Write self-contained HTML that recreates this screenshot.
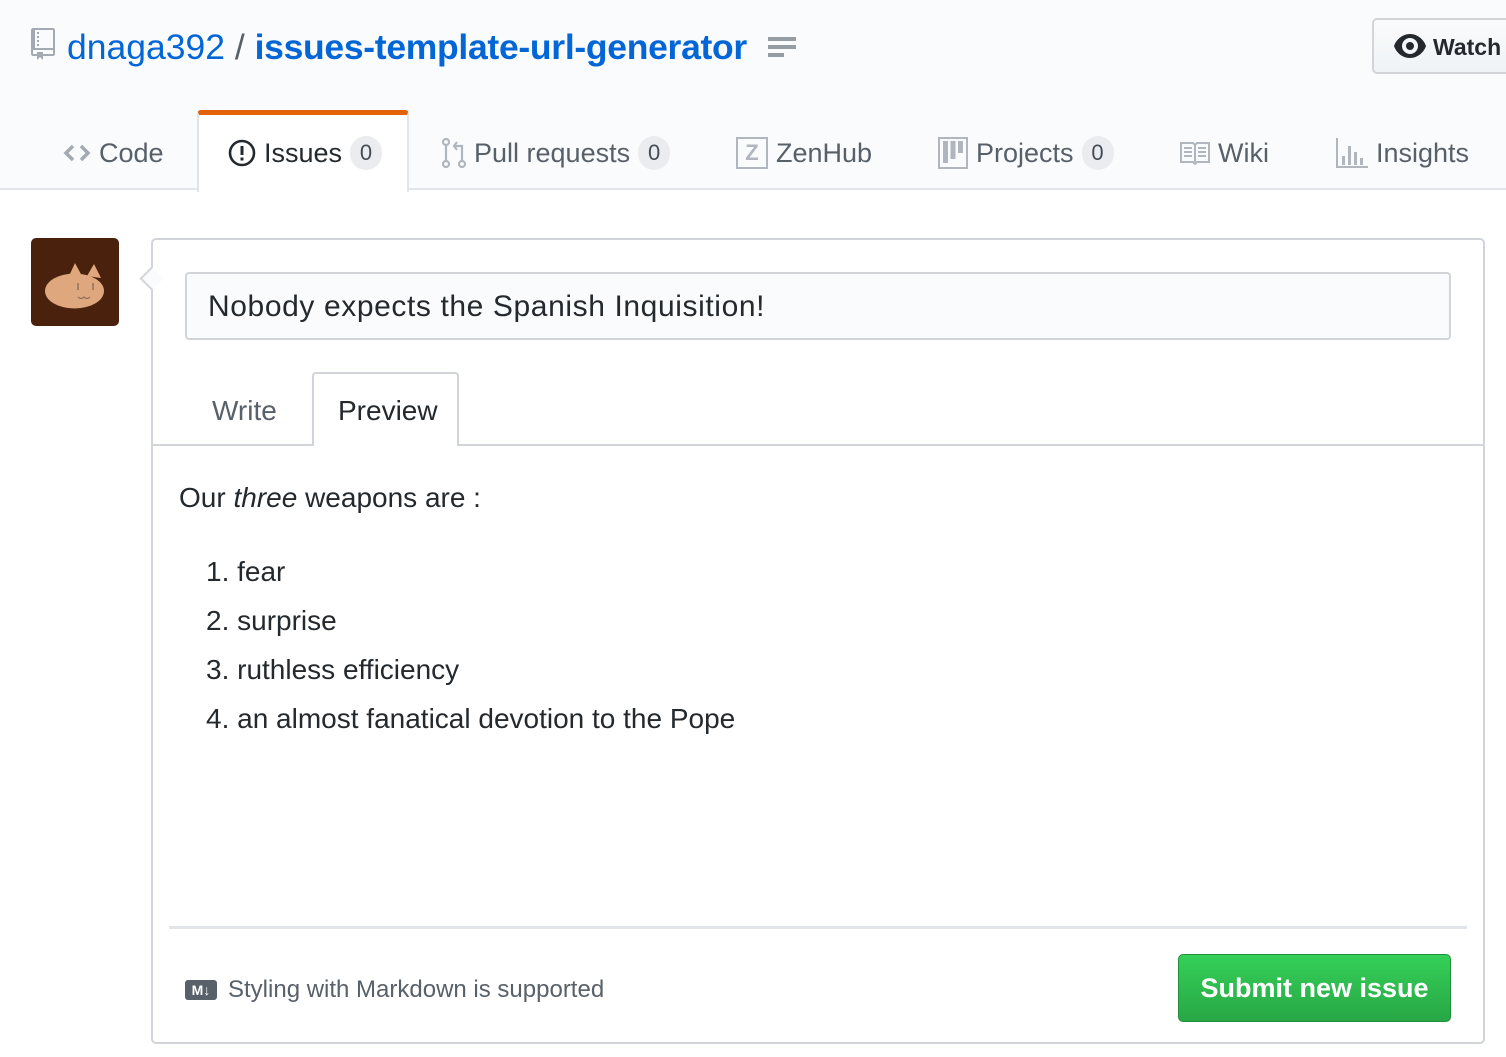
<!DOCTYPE html>
<html><head><meta charset="utf-8"><style>
*{margin:0;padding:0;box-sizing:border-box}
body{width:1506px;height:1057px;background:#fff;font-family:"Liberation Sans",sans-serif;color:#24292e;position:relative;overflow:hidden}
.a{position:absolute;white-space:nowrap}
.hdr{position:absolute;left:0;top:0;width:1506px;height:190px;background:#fafbfc;border-bottom:2px solid #e1e4e8}
.tab{position:absolute;top:136px;height:34px;line-height:34px;font-size:27px;color:#586069;white-space:nowrap;display:flex;align-items:center}
.cnt{display:inline-block;background:#eaecef;color:#444d56;border-radius:17px;height:34px;min-width:32px;text-align:center;font-size:22px;line-height:34px;margin-left:8px;padding:0 8px}
.li{position:absolute;left:206px;font-size:28px;line-height:32px;color:#24292e}
</style></head><body>
<div class="hdr"></div>
<svg class="a" style="left:30px;top:28px" width="26" height="32" viewBox="0 0 12 16"><path fill="#a3aab1" d="M4 9H3V8h1v1zm0-3H3v1h1V6zm0-2H3v1h1V4zm0-2H3v1h1V2zm8-1v12c0 .55-.45 1-1 1H6v2l-1.5-1.5L3 16v-2H1c-.55 0-1-.45-1-1V1c0-.55.45-1 1-1h10c.55 0 1 .45 1 1zm-1 10H1v2h2v-1h3v1h5v-2zm0-10H2v9h9V1z"/></svg>
<div class="a" style="left:67px;top:25px;font-size:35.5px;line-height:44px;color:#0366d6">dnaga392 <span style="color:#586069">/</span> <b style="font-weight:bold;letter-spacing:-0.3px">issues-template-url-generator</b></div>
<svg class="a" style="left:768px;top:37px" width="28" height="22" viewBox="0 0 28 22"><rect x="0" y="0" width="28" height="4" fill="#959da5"/><rect x="0" y="8" width="28" height="4" fill="#959da5"/><rect x="0" y="16" width="16" height="4" fill="#959da5"/></svg>
<div class="a" style="left:1372px;top:18px;width:150px;height:56px;border:2px solid #d1d5da;border-radius:5px;background:linear-gradient(#fafbfc,#eff3f6)"></div>
<svg class="a" style="left:1394px;top:34px" width="32" height="24" viewBox="0 0 16 12"><path fill="#24292e" d="M8 0C4 0 1 3 0 6c1 3 4 6 8 6s7-3 8-6c-1-3-4-6-8-6zm0 10a4 4 0 110-8 4 4 0 010 8zm0-6a2 2 0 100 4 2 2 0 000-4z"/></svg>
<div class="a" style="left:1433px;top:32px;font-size:23px;font-weight:bold;line-height:30px;color:#24292e">Watch</div>
<div class="a" style="left:197px;top:110px;width:212px;height:82px;background:#fff;border:2px solid #e1e4e8;border-bottom:none;border-top:5px solid #e36209;border-radius:4px 4px 0 0"></div>
<div class="tab" style="left:63px"><svg width="28" height="20" viewBox="0 0 28 20" style="margin-right:8px"><path d="M10 3L3 10l7 7M18 3l7 7-7 7" fill="none" stroke="#a3aab1" stroke-width="3.5"/></svg>Code</div>
<div class="tab" style="left:228px;color:#24292e"><svg width="28" height="28" viewBox="0 0 28 28" style="margin-right:8px"><circle cx="14" cy="14" r="12" fill="none" stroke="#24292e" stroke-width="2.6"/><rect x="12.5" y="7" width="3" height="9" fill="#24292e"/><rect x="12.5" y="18.5" width="3" height="3" fill="#24292e"/></svg>Issues<span class="cnt">0</span></div>
<div class="tab" style="left:441px"><svg width="26" height="30" viewBox="0 0 26 30" style="margin-right:7px"><g fill="none" stroke="#b0b6bd" stroke-width="2.2"><circle cx="5" cy="26" r="3"/><circle cx="21" cy="26" r="3"/><circle cx="5" cy="4" r="3"/><path d="M5 7v16M21 23V8h-7M16 4l-3 4 3 4"/></g></svg>Pull requests<span class="cnt">0</span></div>
<div class="tab" style="left:736px"><span style="display:inline-block;width:32px;height:32px;border:2px solid #b0b6bd;color:#b0b6bd;font-size:22px;font-weight:bold;line-height:28px;text-align:center;margin-right:8px">Z</span>ZenHub</div>
<div class="tab" style="left:938px"><svg width="30" height="32" viewBox="0 0 30 32" style="margin-right:8px"><rect x="1" y="1" width="28" height="30" fill="none" stroke="#b0b6bd" stroke-width="2"/><rect x="5" y="4" width="5" height="22" fill="#b0b6bd"/><rect x="12.5" y="4" width="5" height="18" fill="#b0b6bd"/><rect x="20" y="4" width="5" height="12" fill="#b0b6bd"/></svg>Projects<span class="cnt">0</span></div>
<div class="tab" style="left:1180px"><svg width="30" height="24" viewBox="0 0 30 24" style="margin-right:8px"><g fill="none" stroke="#b0b6bd" stroke-width="2"><path d="M1 2h12l2 2 2-2h12v19H17l-2 2-2-2H1z"/><path d="M15 4v17M4 7h8M4 11h8M4 15h8M18 7h8M18 11h8M18 15h8"/></g></svg>Wiki</div>
<div class="tab" style="left:1336px"><svg width="32" height="30" viewBox="0 0 32 30" style="margin-right:8px"><g fill="#b0b6bd"><rect x="0" y="0" width="2" height="30"/><rect x="0" y="28" width="32" height="2"/><rect x="6" y="18" width="3" height="9"/><rect x="12" y="8" width="3" height="19"/><rect x="18" y="14" width="3" height="13"/><rect x="24" y="20" width="3" height="7"/></g></svg>Insights</div>
<div class="a" style="left:31px;top:238px;width:88px;height:88px;background:#4a210d;border-radius:5px;overflow:hidden">
<svg width="88" height="88" viewBox="0 0 88 88"><path d="M38 38L44 25L51 38z M56 38L63 26L70 40z" fill="#dea77e"/><ellipse cx="43.5" cy="53" rx="29.5" ry="17.5" fill="#dea77e"/><path d="M47 45v7M62 45v7" stroke="#8a6a55" stroke-width="1.3"/><path d="M47 59q3 3 6 0q3 3 6 0" fill="none" stroke="#8a6a55" stroke-width="1.2"/></svg></div>
<div class="a" style="left:151px;top:238px;width:1334px;height:806px;border:2px solid #d1d5da;border-radius:5px;background:#fff"></div>
<div class="a" style="left:143px;top:270px;width:17px;height:17px;background:#fafbfc;border-left:2px solid #d1d5da;border-bottom:2px solid #d1d5da;transform:rotate(45deg)"></div>
<div class="a" style="left:185px;top:272px;width:1266px;height:68px;border:2px solid #d1d5da;border-radius:4px;background:#fafbfc"></div>
<div class="a" style="left:208px;top:288px;font-size:30px;letter-spacing:0.6px;line-height:38px;color:#24292e">Nobody expects the Spanish Inquisition!</div>
<div class="a" style="left:153px;top:444px;width:1330px;height:2px;background:#d1d5da"></div>
<div class="a" style="left:312px;top:372px;width:147px;height:74px;border:2px solid #d1d5da;border-bottom:none;border-radius:4px 4px 0 0;background:#fff"></div>
<div class="a" style="left:212px;top:395px;font-size:28px;line-height:32px;color:#586069">Write</div>
<div class="a" style="left:338px;top:395px;font-size:28px;line-height:32px;color:#24292e">Preview</div>
<div class="a" style="left:179px;top:482px;font-size:28px;line-height:32px">Our <i>three</i> weapons are :</div>
<div class="li" style="top:556px">1. fear</div>
<div class="li" style="top:605px">2. surprise</div>
<div class="li" style="top:654px">3. ruthless efficiency</div>
<div class="li" style="top:703px">4. an almost fanatical devotion to the Pope</div>
<div class="a" style="left:169px;top:926px;width:1298px;height:3px;background:#e1e4e8"></div>
<div class="a" style="left:185px;top:980px;width:32px;height:20px;background:#586069;border-radius:3px;color:#fff;font-size:14px;font-weight:bold;line-height:20px;text-align:center">M↓</div>
<div class="a" style="left:228px;top:975px;font-size:24px;line-height:30px;color:#586069">Styling with Markdown is supported</div>
<div class="a" style="left:1178px;top:954px;width:273px;height:68px;border:1px solid #22903b;border-radius:5px;background:linear-gradient(#34d058,#28a745);color:#fff;font-size:27px;font-weight:bold;line-height:66px;text-align:center">Submit new issue</div>
</body></html>
